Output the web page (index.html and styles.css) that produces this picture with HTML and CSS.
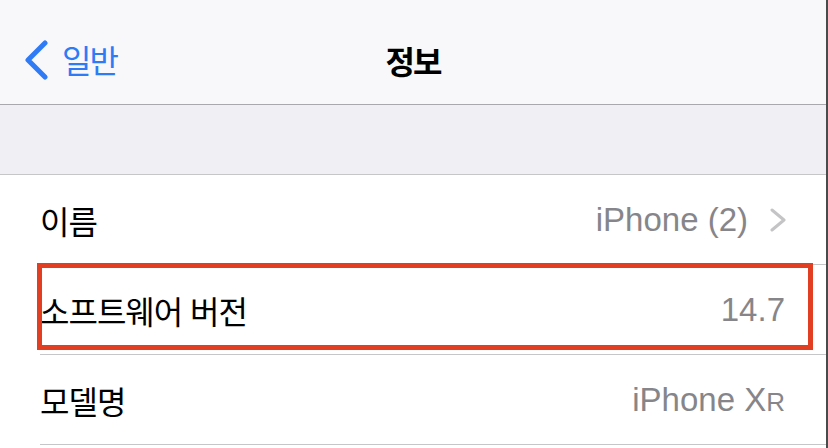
FILE: index.html
```html
<!DOCTYPE html>
<html lang="ko">

<head>
    <meta charset="UTF-8">
    <meta name="viewport" content="width=device-width, initial-scale=1.0">
    <title>정보</title>
    <link rel="stylesheet" href="styles.css">
</head>

<body>
    <div class="screen">
        <header class="nav-bar">
            <a class="back-link" href="#">
                <svg class="back-icon" width="24" height="40" viewBox="0 0 24 40">
                    <path d="M21 3 L4 20 L21 37" fill="none" stroke="#2f7bf5" stroke-width="5"
                        stroke-linecap="round" stroke-linejoin="round" />
                </svg>
                <span>일반</span>
            </a>
            <h1 class="nav-title">정보</h1>
            <div></div>
        </header>

        <div class="group-gap"></div>

        <ul class="settings-list">
            <li class="settings-row">
                <span class="row-label">이름</span>
                <span class="row-value">iPhone (2)</span>
                <svg class="row-chevron" width="17" height="24" viewBox="0 0 17 24">
                    <path d="M2 2 L14 12 L2 22" fill="none" stroke="#c4c4c7" stroke-width="3"
                        stroke-linecap="round" stroke-linejoin="round" />
                </svg>
            </li>
            <li class="settings-row highlighted">
                <span class="row-label">소프트웨어 버전</span>
                <span class="row-value">14.7</span>
            </li>
            <li class="settings-row">
                <span class="row-label">모델명</span>
                <span class="row-value">iPhone X<span class="small-cap">R</span></span>
            </li>
        </ul>
    </div>
</body>

</html>
```

FILE: styles.css
```css
/* General Styling */
body {
    margin: 0;
    padding: 0;
    background: #ffffff;
    font-family: "Liberation Sans", "Noto Sans CJK KR", sans-serif;
    overflow: hidden;
}

.screen {
    width: 826px;
    height: 448px;
    border-right: 2px solid #4a4a4a;
    background: #ffffff;
}

/* Navigation Bar */
.nav-bar {
    height: 88px;
    padding-top: 16px;
    display: grid;
    grid-template-columns: 1fr auto 1fr;
    align-items: center;
    background: #f8f8fa;
    border-bottom: 1px solid #a9a9ad;
}

.back-link {
    display: flex;
    align-items: center;
    gap: 14px;
    padding-left: 24px;
    color: #2f7bf5;
    font-size: 32px;
    letter-spacing: -2px;
    text-decoration: none;
}

.back-link span {
    margin-top: -2px;
}

.nav-title {
    margin: 0;
    font-size: 32px;
    font-weight: bold;
    letter-spacing: -2px;
    color: #000000;
}

/* Grouped Gap */
.group-gap {
    height: 69px;
    background: #efeff4;
    border-bottom: 1px solid #c6c6c8;
}

/* Settings List */
.settings-list {
    list-style: none;
    margin: 0;
    padding: 0 0 0 40px;
}

.settings-row {
    position: relative;
    display: flex;
    align-items: center;
    height: 89px;
    padding-right: 41px;
    border-bottom: 1px solid #c6c6c8;
}

.row-label {
    flex: 1;
    font-size: 32px;
    letter-spacing: -1px;
    color: #000000;
}

.row-value {
    font-size: 33px;
    color: #86868a;
}

.small-cap {
    font-size: 26px;
}

.row-chevron {
    margin-left: 22px;
    margin-right: -2px;
}

/* Annotation Box */
.highlighted::after {
    content: "";
    position: absolute;
    left: -3px;
    top: -2px;
    width: 766px;
    height: 77px;
    border: 5px solid #e23e22;
}
```
